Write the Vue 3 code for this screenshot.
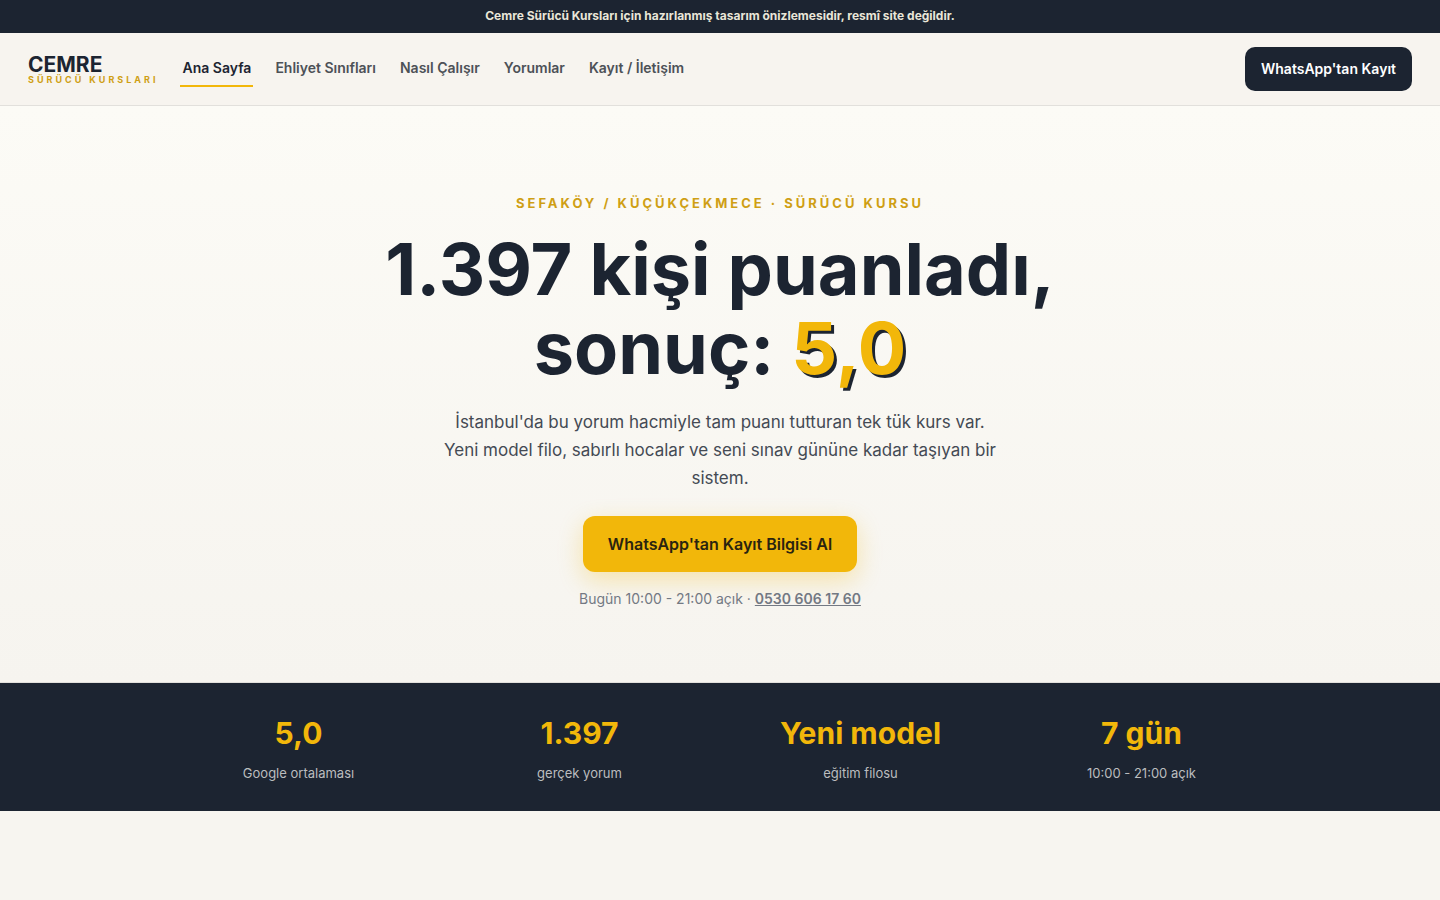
<script setup>
const links = [
  { label: 'Ana Sayfa', href: '#ana-sayfa', active: true },
  { label: 'Ehliyet Sınıfları', href: '#ehliyet' },
  { label: 'Nasıl Çalışır', href: '#nasil' },
  { label: 'Yorumlar', href: '#yorumlar' },
  { label: 'Kayıt / İletişim', href: '#iletisim' },
]
const stats = [
  { value: '5,0', label: 'Google ortalaması' },
  { value: '1.397', label: 'gerçek yorum' },
  { value: 'Yeni model', label: 'eğitim filosu' },
  { value: '7 gün', label: '10:00 - 21:00 açık' },
]
</script>

<template>
  <div class="page">
    <p class="notice">Cemre Sürücü Kursları için hazırlanmış tasarım önizlemesidir, resmî site değildir.</p>
    <header class="header">
      <a class="logo" href="#ana-sayfa">
        <span class="logo-name">CEMRE</span>
        <span class="logo-sub">SÜRÜCÜ KURSLARI</span>
      </a>
      <nav class="nav">
        <a v-for="l in links" :key="l.href" :href="l.href" class="nav-link" :class="{ active: l.active }">{{ l.label }}</a>
      </nav>
      <a class="header-cta" href="#whatsapp">WhatsApp'tan Kayıt</a>
    </header>
    <main>
      <section class="hero">
        <p class="eyebrow">SEFAKÖY / KÜÇÜKÇEKMECE · SÜRÜCÜ KURSU</p>
        <h1 class="title">1.397 kişi puanladı,<br>sonuç: <span class="score">5,0</span></h1>
        <p class="lead">İstanbul'da bu yorum hacmiyle tam puanı tutturan tek tük kurs var. Yeni model filo, sabırlı hocalar ve seni sınav gününe kadar taşıyan bir sistem.</p>
        <a class="cta" href="#whatsapp">WhatsApp'tan Kayıt Bilgisi Al</a>
        <p class="hours">Bugün 10:00 - 21:00 açık · <a href="tel:05306061760">0530 606 17 60</a></p>
      </section>
      <section class="stats">
        <dl class="stats-grid">
          <div v-for="s in stats" :key="s.value" class="stat">
            <dd>{{ s.value }}</dd>
            <dt>{{ s.label }}</dt>
          </div>
        </dl>
      </section>
    </main>
  </div>
</template>

<style>
body {
  margin: 0;
  background: #f7f5f0;
}
</style>

<style scoped>
.page {
  font-family: Inter, "Liberation Sans", sans-serif;
  color: #1c2431;
}
.page p,
.page h1,
.page dl,
.page dd {
  margin: 0;
}
a {
  color: inherit;
  text-decoration: none;
}
.page .notice {
  padding: 6px 16px 7px;
  background: #1c2431;
  color: #e9e6d8;
  font-size: 12px;
  line-height: 20px;
  font-weight: 700;
  text-align: center;
}
.header {
  display: flex;
  align-items: center;
  gap: 22px;
  padding: 14px 28px;
  border-bottom: 1px solid #e2e0dc;
  background: #f7f4ef;
}
.logo {
  display: flex;
  flex-direction: column;
}
.logo-name {
  font-size: 21px;
  line-height: 20px;
  font-weight: 700;
}
.logo-sub {
  color: #cf9f14;
  font-size: 9px;
  line-height: 9px;
  font-weight: 700;
  letter-spacing: 3px;
}
.nav {
  display: flex;
  gap: 20px;
}
.nav-link {
  padding: 5px 2px;
  border-bottom: 2px solid transparent;
  color: #4d5157;
  font-size: 14px;
  line-height: 24px;
  font-weight: 600;
}
.nav-link.active {
  border-color: #f2b70a;
  color: #1c2431;
}
.header-cta {
  margin-left: auto;
  padding: 0 16px;
  border-radius: 10px;
  background: #1c2431;
  color: #fff;
  font-size: 14px;
  line-height: 44px;
  font-weight: 600;
}
.hero {
  display: flex;
  flex-direction: column;
  align-items: center;
  padding: 86px 28px 72px;
  border-bottom: 1px solid #e2e0dc;
  background: linear-gradient(#fcfbf6, #f6f4ef);
  text-align: center;
}
.eyebrow {
  color: #cf9f14;
  font-size: 13px;
  line-height: 22px;
  font-weight: 700;
  letter-spacing: 3px;
}
.page .title {
  margin-top: 15px;
  font-size: 72px;
  line-height: 79px;
  font-weight: 700;
}
.score {
  color: #f2b70a;
  text-shadow: 3px 3px 0 #1c2431;
}
.page .lead {
  max-width: 560px;
  margin-top: 21px;
  color: #444a54;
  font-size: 17px;
  line-height: 28px;
}
.cta {
  margin-top: 24px;
  padding: 0 25px;
  border-radius: 12px;
  background: #f2b70a;
  box-shadow: 0 8px 24px rgba(242, 183, 10, 0.3);
  color: #2a2410;
  font-size: 16px;
  line-height: 56px;
  font-weight: 600;
}
.page .hours {
  margin-top: 16px;
  color: #737983;
  font-size: 14px;
  line-height: 22px;
}
.hours a {
  font-weight: 600;
  text-decoration: underline;
}
.stats {
  padding: 30px 28px;
  background: #1c2431;
}
.page .stats-grid {
  display: grid;
  grid-template-columns: repeat(4, 1fr);
  max-width: 1124px;
  margin: 0 auto;
}
.stat {
  text-align: center;
}
.stat dd {
  color: #f2b70a;
  font-size: 30px;
  line-height: 40px;
  font-weight: 700;
}
.stat dt {
  margin-top: 12px;
  color: #bbbdbf;
  font-size: 13px;
  line-height: 16px;
}
</style>
